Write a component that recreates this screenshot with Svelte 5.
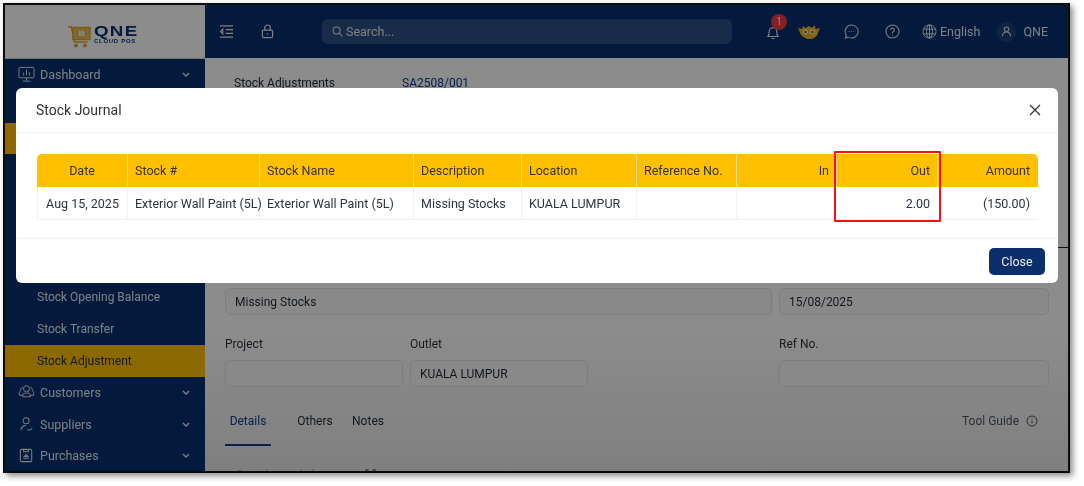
<script>
  const columns = [
    { label: 'Date', value: 'Aug 15, 2025', width: 91, cls: 'center' },
    { label: 'Stock #', value: 'Exterior Wall Paint (5L)', width: 132, cls: '' },
    { label: 'Stock Name', value: 'Exterior Wall Paint (5L)', width: 154, cls: '' },
    { label: 'Description', value: 'Missing Stocks', width: 108, cls: '' },
    { label: 'Location', value: 'KUALA LUMPUR', width: 115, cls: '' },
    { label: 'Reference No.', value: '', width: 100, cls: '' },
    { label: 'In', value: '', width: 100, cls: 'right' },
    { label: 'Out', value: '2.00', width: 101, cls: 'right' },
    { label: 'Amount', value: '(150.00)', width: 100, cls: 'right' }
  ];
</script>

<div class="page">
  <div class="frame">
    <aside class="sidebar">
      <div class="logo">
        <svg class="cart" viewBox="0 0 26 24" width="26" height="24" fill="none">
          <path d="M1 2h3.5l3 15h13" stroke="#e0a722" stroke-width="1.6"/>
          <rect x="6" y="2.5" width="17" height="12" fill="#e8c464" stroke="#e0a722" stroke-width="1.4"/>
          <rect x="10.5" y="5" width="8" height="7" fill="#f5e6b8" stroke="#e0a722"/>
          <circle cx="9" cy="20.5" r="1.9" fill="#e0a722"/>
          <circle cx="18" cy="20.5" r="1.9" fill="#e0a722"/>
        </svg>
        <div class="logo-text">
          <span class="qne">QNE</span>
          <span class="pos">CLOUD POS</span>
        </div>
      </div>

      <div class="nav-item">
        <svg class="nav-icon" viewBox="0 0 18 18" fill="none" stroke="currentColor" stroke-width="1">
          <rect x="1" y="1.5" width="16" height="11" rx="1"/>
          <path d="M9 12.5v3M5 16h8M6 10V7M9 10V4M12 10V6.5"/>
        </svg>
        <span class="nav-label">Dashboard</span>
        <svg class="chev" viewBox="0 0 8 5" fill="none" stroke="currentColor" stroke-width="1.3"><path d="M1 1l3 3 3-3"/></svg>
      </div>
      <div class="nav-item"></div>
      <div class="nav-item active"></div>
      <div class="nav-item"></div>
      <div class="nav-item"></div>
      <div class="nav-item"></div>
      <div class="nav-item"></div>
      <div class="nav-item sub">Stock Opening Balance</div>
      <div class="nav-item sub">Stock Transfer</div>
      <div class="nav-item sub active">Stock Adjustment</div>
      <div class="nav-item">
        <svg class="nav-icon" viewBox="0 0 18 18" fill="none" stroke="currentColor" stroke-width="1">
          <circle cx="9" cy="5" r="3.2"/>
          <path d="M5.8 4.5C4 3 2.5 4.5 3 6.5 1.5 8 1 10 1.5 12h4M12.2 4.5C14 3 15.5 4.5 15 6.5c1.5 1.5 2 3.5 1.5 5.5h-4M5 13.5V11c1-2 7-2 8 0v2.5z"/>
        </svg>
        <span class="nav-label">Customers</span>
        <svg class="chev" viewBox="0 0 8 5" fill="none" stroke="currentColor" stroke-width="1.3"><path d="M1 1l3 3 3-3"/></svg>
      </div>
      <div class="nav-item">
        <svg class="nav-icon" viewBox="0 0 18 18" fill="none" stroke="currentColor" stroke-width="1.1">
          <circle cx="8.5" cy="5" r="3.2"/>
          <path d="M3 15c0-3 3-5 5.500-5M10 14.500c2 .8 4 0 5-1.500"/>
        </svg>
        <span class="nav-label">Suppliers</span>
        <svg class="chev" viewBox="0 0 8 5" fill="none" stroke="currentColor" stroke-width="1.3"><path d="M1 1l3 3 3-3"/></svg>
      </div>
      <div class="nav-item">
        <svg class="nav-icon" viewBox="0 0 18 18" fill="none" stroke="currentColor" stroke-width="1.1">
          <rect x="2.500" y="2.500" width="12" height="13" rx="1.500"/>
          <path d="M6 2.500v2.500h5V2.500M5.500 12h6M8.500 8l-2 2h4z"/>
        </svg>
        <span class="nav-label">Purchases</span>
        <svg class="chev" viewBox="0 0 8 5" fill="none" stroke="currentColor" stroke-width="1.3"><path d="M1 1l3 3 3-3"/></svg>
      </div>
    </aside>

    <div class="workspace">
      <header class="topbar">
        <svg class="tb-icon menu" viewBox="0 0 16 14" fill="none" stroke="currentColor" stroke-width="1.2">
          <path d="M1 1h14M7 5h8M7 9h8M1 13h14M4 4.500L1.500 7 4 9.500z"/>
        </svg>
        <svg class="tb-icon lock" viewBox="0 0 14 16" fill="none" stroke="currentColor" stroke-width="1.300">
          <rect x="1.500" y="6.500" width="11" height="8" rx="1.500"/>
          <path d="M4 6.500V4a3 3 0 0 1 6 0v2.500M7 10v1.500"/>
        </svg>
        <div class="search">
          <svg viewBox="0 0 12 12" width="11" height="11" fill="none" stroke="currentColor" stroke-width="1.100">
            <circle cx="5" cy="5" r="3.800"/><path d="M8 8l3.300 3.300"/>
          </svg>
          <span>Search...</span>
        </div>
        <div class="tb-right">
          <div class="bell">
            <svg viewBox="0 0 14 16" width="14" height="16" fill="none" stroke="currentColor" stroke-width="1.200">
              <path d="M2 12.500c1-1 1.200-2 1.200-5a3.800 3.800 0 0 1 7.600 0c0 3 .2 4 1.200 5zM5.500 14.500h3"/>
            </svg>
            <span class="badge">1</span>
          </div>
          <svg class="cat" viewBox="0 0 22 16" width="22" height="16">
            <path d="M0 4l4 1 1-3 2.500 2L11 2l3 2 2.500-3 1 4 4.500-1-2 5c-1 4-5 6-8.500 6S4 13 2 9z" fill="#f0b429"/>
            <circle cx="7.500" cy="8" r="2.400" fill="#fff3c4"/><circle cx="14.500" cy="8" r="2.400" fill="#fff3c4"/>
            <circle cx="7.500" cy="8" r="1.100" fill="#333"/><circle cx="14.500" cy="8" r="1.100" fill="#333"/>
          </svg>
          <svg class="round" viewBox="0 0 16 16" fill="none" stroke="currentColor" stroke-width="1.100">
            <path d="M8 1a7 7 0 1 1-3.500 13L1.500 15l1-3A7 7 0 0 1 8 1z"/>
            <path d="M5 8h.8M7.600 8h.8M10.200 8h.8"/>
          </svg>
          <svg class="round help" viewBox="0 0 16 16" fill="none" stroke="currentColor" stroke-width="1.100">
            <circle cx="8" cy="8" r="7"/>
            <path d="M6 6.200a2 2 0 1 1 3 1.800c-.7.400-1 .8-1 1.600M8 11.300v.9"/>
          </svg>
          <div class="lang">
            <svg viewBox="0 0 16 16" width="15" height="15" fill="none" stroke="currentColor" stroke-width="1">
              <circle cx="8" cy="8" r="7"/><ellipse cx="8" cy="8" rx="3.200" ry="7"/>
              <path d="M8 1v14M1.500 5.500h13M1.500 10.500h13"/>
            </svg>
            <span>English</span>
          </div>
          <div class="user">
            <span class="avatar">
              <svg viewBox="0 0 12 12" width="11" height="11" fill="none" stroke="currentColor" stroke-width="1.100">
                <circle cx="6" cy="3.500" r="2.500"/><path d="M1.500 11c.3-3 2-4.500 4.500-4.500s4.200 1.500 4.500 4.500"/>
              </svg>
            </span>
            <span>QNE</span>
          </div>
        </div>
      </header>

      <main class="content">
        <div class="doc-head">
          <span class="doc-title">Stock Adjustments</span>
          <span class="doc-no">SA2508/001</span>
        </div>
        <div class="hidden-section"></div>
        <div class="row-desc">
          <div class="field">Missing Stocks</div>
          <div class="field">15/08/2025</div>
        </div>
        <div class="row-meta">
          <div class="col-project">
            <div class="label">Project</div>
            <div class="field"></div>
          </div>
          <div class="col-outlet">
            <div class="label">Outlet</div>
            <div class="field">KUALA LUMPUR</div>
          </div>
          <div class="col-ref">
            <div class="label">Ref No.</div>
            <div class="field"></div>
          </div>
        </div>
        <div class="tabs">
          <span class="tab on">Details</span>
          <span class="tab">Others</span>
          <span class="tab">Notes</span>
          <span class="guide">
            Tool Guide
            <svg viewBox="0 0 12 12" width="12" height="12" fill="none" stroke="currentColor" stroke-width="1">
              <circle cx="6" cy="6" r="5"/><path d="M6 5.500v3M6 3.300v1"/>
            </svg>
          </span>
        </div>
        <div class="scan">
          <span>Scan barcode here</span>
          <svg viewBox="0 0 12 12" width="11" height="11" fill="none" stroke="currentColor" stroke-width="1.100">
            <path d="M1 4V1h3M8 1h3v3M1 8v3h3M8 11h3V8"/>
          </svg>
        </div>
      </main>
    </div>

    <div class="backdrop"></div>

    <section class="modal">
      <div class="modal-head">
        <h2>Stock Journal</h2>
        <svg viewBox="0 0 12 12" width="12" height="12" fill="none" stroke="#333" stroke-width="1.300">
          <path d="M1 1l10 10M11 1L1 11"/>
        </svg>
      </div>
      <div class="modal-body">
        <div class="table">
          {#each columns as c}
            <div class="col" style="width: {c.width}px">
              <div class="th {c.cls}">{c.label}</div>
              <div class="td {c.cls}">{c.value}</div>
            </div>
          {/each}
        </div>
        <div class="highlight"></div>
      </div>
      <div class="modal-foot">
        <button type="button">Close</button>
      </div>
    </section>
  </div>
</div>

<style>
  :global(body) {
    margin: 0;
    background: #fff;
    font-family: Roboto, "Liberation Sans", sans-serif;
  }
  .page {
    width: 1084px;
    height: 486px;
    padding: 3px 0 0 3px;
    box-sizing: border-box;
    overflow: hidden;
  }
  .frame {
    position: relative;
    display: flex;
    width: 1067px;
    height: 470px;
    box-sizing: border-box;
    border: 2px solid #0c0c0c;
    overflow: hidden;
    box-shadow: 0 0 0 0 #000;
    filter: drop-shadow(3px 3px 3px rgba(0, 0, 0, 0.45));
  }
  .sidebar {
    width: 200px;
    flex: none;
    background: #06306f;
    color: #e4e9f0;
  }
  .logo {
    height: 53px;
    background: #fff;
    border-bottom: 1px solid #d8d8d8;
    display: flex;
    align-items: flex-start;
    padding: 16px 0 0 62px;
    box-sizing: content-box;
    gap: 1px;
    height: 37px;
  }
  .cart {
    margin-top: 4px;
  }
  .logo-text {
    display: flex;
    flex-direction: column;
    margin-top: 4px;
    color: #06306f;
    font-family: "Liberation Sans", sans-serif;
    font-weight: 700;
    line-height: 1;
  }
  .qne {
    font-size: 15px;
    letter-spacing: 1px;
    transform: scaleX(1.25);
    transform-origin: left;
    line-height: 12px;
  }
  .pos {
    font-size: 6px;
    letter-spacing: 0.7px;
    margin-top: 1px;
    white-space: nowrap;
  }
  .nav-item {
    height: 31.75px;
    display: flex;
    align-items: center;
    font-size: 12.500px;
    padding: 0 15px 0 13px;
    box-sizing: border-box;
  }
  .nav-item.sub {
    padding-left: 32px;
    font-size: 12px;
  }
  .nav-item.active {
    background: #ffbf00;
    color: #26333f;
  }
  .nav-icon {
    width: 17px;
    height: 17px;
    flex: none;
  }
  .nav-label {
    margin-left: 5px;
    flex: 1;
  }
  .chev {
    width: 8px;
    height: 5px;
  }
  .workspace {
    flex: 1;
    min-width: 0;
    display: flex;
    flex-direction: column;
    background: linear-gradient(#ffffff, #ffffff 70%, #e8e8e8);
  }
  .topbar {
    height: 53px;
    flex: none;
    background: #06306f;
    color: #e4e9f0;
    display: flex;
    align-items: center;
    padding-left: 14px;
    padding-right: 20px;
  }
  .tb-icon {
    flex: none;
  }
  .menu {
    width: 15px;
    height: 13px;
  }
  .lock {
    width: 13px;
    height: 15px;
    margin-left: 27px;
  }
  .search {
    width: 410px;
    height: 25px;
    margin-left: 48px;
    flex: none;
    border-radius: 6px;
    background: #2c4f84;
    display: flex;
    align-items: center;
    gap: 3px;
    padding-left: 10px;
    box-sizing: border-box;
    font-size: 12.500px;
  }
  .tb-right {
    flex: 1;
    display: flex;
    align-items: center;
  }
  .bell {
    position: relative;
    margin-left: 34px;
    display: flex;
  }
  .badge {
    position: absolute;
    left: 5px;
    top: -10px;
    width: 16px;
    height: 16px;
    border-radius: 50%;
    background: #ef3e46;
    font-size: 10px;
    line-height: 16px;
    text-align: center;
    color: #f4f4f4;
  }
  .cat {
    margin-left: 18px;
  }
  .round {
    width: 15px;
    height: 15px;
    margin-left: 24px;
  }
  .help {
    margin-left: 26px;
  }
  .lang {
    display: flex;
    align-items: center;
    gap: 3px;
    margin-left: 22px;
    font-size: 12.500px;
  }
  .user {
    display: flex;
    align-items: center;
    gap: 7px;
    margin-left: auto;
    font-size: 12.500px;
  }
  .avatar {
    width: 20px;
    height: 20px;
    border-radius: 50%;
    background: #1d437b;
    display: grid;
    place-items: center;
  }
  .content {
    flex: 1;
    min-height: 0;
    padding: 0 19px 0 20px;
    overflow: hidden;
    color: #1f2a36;
    font-size: 12px;
  }
  .doc-head {
    display: flex;
    padding: 17px 0 0 9px;
    height: 16px;
    line-height: 16px;
  }
  .doc-title {
    width: 168px;
  }
  .doc-no {
    color: #0a3d8a;
  }
  .hidden-section {
    height: 197px;
    margin: 0 -19px 0 -20px;
    box-sizing: content-box;
    position: relative;
    background: linear-gradient(#0000 0 156px, #1a1a1a 156px 157px, #0000 157px);
  }
  .row-desc {
    display: flex;
    gap: 7px;
  }
  .row-desc .field:first-child {
    width: 547px;
  }
  .row-desc .field:last-child {
    width: 270px;
  }
  .field {
    height: 27px;
    box-sizing: border-box;
    border: 1px solid #e4e6ea;
    border-radius: 5px;
    background: #fafafa;
    display: flex;
    align-items: center;
    padding-left: 9px;
    white-space: nowrap;
  }
  .row-meta {
    display: flex;
    margin-top: 21px;
  }
  .label {
    height: 24px;
    line-height: 16px;
    color: #2c3540;
  }
  .col-project {
    width: 178px;
    margin-right: 7px;
  }
  .col-outlet {
    width: 178px;
    margin-right: 191px;
  }
  .col-ref {
    width: 270px;
  }
  .tabs {
    display: flex;
    align-items: center;
    height: 50px;
    margin-top: 9px;
    border-bottom: 1px solid #eceef1;
    box-sizing: content-box;
    position: relative;
  }
  .tab {
    width: 46px;
    height: 50px;
    line-height: 50px;
    text-align: center;
    box-sizing: border-box;
    margin-right: 26px;
  }
  .tab:nth-child(2) {
    width: 36px;
    margin-right: 19px;
  }
  .tab:nth-child(3) {
    width: 32px;
  }
  .tab.on {
    color: #0a3d8a;
    border-bottom: 2px solid #0a3d8a;
  }
  .guide {
    margin-left: auto;
    margin-right: 11px;
    display: flex;
    align-items: center;
    gap: 7px;
    color: #4c5763;
  }
  .scan {
    margin-top: 14px;
    margin-left: 1px;
    width: 160px;
    height: 27px;
    box-sizing: border-box;
    border: 1px solid #e4e6ea;
    border-radius: 5px;
    display: flex;
    align-items: center;
    justify-content: space-between;
    padding: 0 9px;
    color: #9aa0a8;
  }
  .scan svg {
    color: #333;
  }
  .backdrop {
    position: absolute;
    inset: 0;
    background: rgba(0, 0, 0, 0.45);
  }
  .modal {
    position: absolute;
    left: 11px;
    top: 83px;
    width: 1042px;
    height: 195px;
    background: #fff;
    border-radius: 6px;
    display: flex;
    flex-direction: column;
    color: #2b3440;
    font-size: 12.500px;
  }
  .modal-head {
    height: 45px;
    flex: none;
    box-sizing: border-box;
    border-bottom: 1px solid #f1f2f4;
    display: flex;
    align-items: center;
    justify-content: space-between;
    padding: 0 17px 0 20px;
  }
  h2 {
    margin: 0;
    font-size: 14px;
    font-weight: 400;
    color: #333;
  }
  .modal-body {
    position: relative;
    height: 106px;
    flex: none;
    box-sizing: border-box;
    border-bottom: 1px solid #f1f2f4;
    padding: 21px 20px 0 21px;
  }
  .table {
    display: flex;
    width: 1001px;
    height: 66px;
    border-radius: 5px 5px 0 0;
    overflow: hidden;
    border-bottom: 1px solid #eef0f4;
    box-sizing: border-box;
  }
  .col {
    flex: none;
    display: flex;
    flex-direction: column;
  }
  .th,
  .td {
    padding: 0 7px;
    display: flex;
    align-items: center;
    white-space: nowrap;
    box-sizing: border-box;
    border-right: 1px solid #f0f1f4;
  }
  .th {
    height: 33px;
    background: #ffc000;
    border-right-color: #ffe08a;
    color: #3a3320;
  }
  .td {
    height: 32px;
    font-size: 12.500px;
  }
  .col:first-child .td {
    border-left: 1px solid #eef0f4;
  }
  .col:last-child .th,
  .col:last-child .td {
    border-right-color: transparent;
  }
  .col:nth-last-child(2) .td,
  .col:nth-last-child(3) .td {
    border-right-color: transparent;
  }
  .center {
    justify-content: center;
  }
  .right {
    justify-content: flex-end;
  }
  .highlight {
    position: absolute;
    left: 818px;
    top: 18px;
    width: 107px;
    height: 71px;
    box-sizing: border-box;
    border: 2px solid #fb0d14;
    border-radius: 1px;
  }
  .modal-foot {
    flex: 1;
    display: flex;
    align-items: center;
    justify-content: flex-end;
    padding-right: 13px;
  }
  button {
    width: 56px;
    height: 27px;
    border: 0;
    border-radius: 5px;
    background: #0a2f6b;
    color: #e8ecf2;
    font: inherit;
    font-size: 12.500px;
  }
</style>
